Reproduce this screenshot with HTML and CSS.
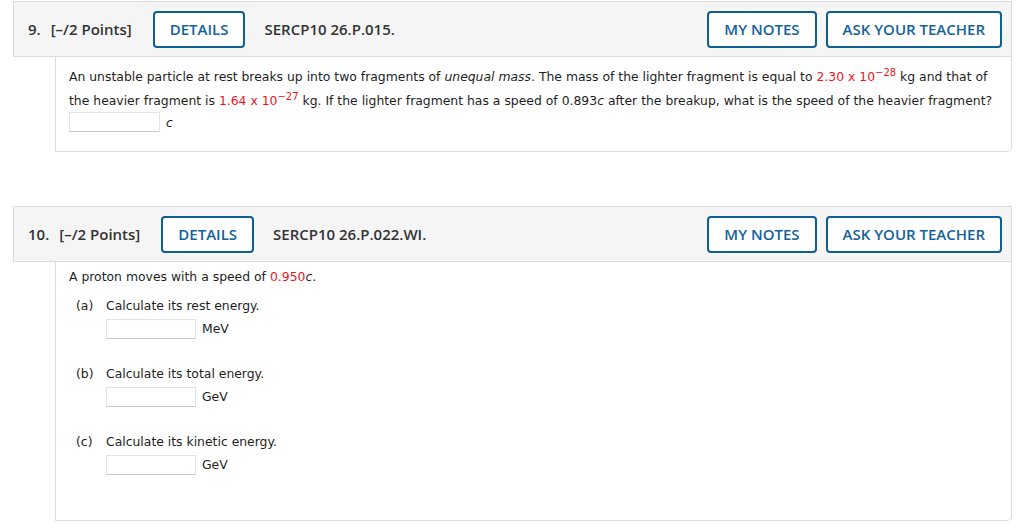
FILE: index.html
```html
<!DOCTYPE html>
<html>
<head>
<meta charset="utf-8">
<link rel="stylesheet" href="styles.css">
</head>
<body>
<div class="page">
  <section class="question q9">
    <div class="q-header">
      <span class="q-num">9.</span>
      <span class="q-points">[–/2 Points]</span>
      <button class="btn btn-details">DETAILS</button>
      <span class="q-code">SERCP10 26.P.015.</span>
      <div class="q-actions">
        <button class="btn">MY NOTES</button>
        <button class="btn">ASK YOUR TEACHER</button>
      </div>
    </div>
    <div class="q-body">
      <p class="q-text">An unstable particle at rest breaks up into two fragments of <em>unequal mass</em>. The mass of the lighter fragment is equal to <span class="red">2.30 x 10<sup>−28</sup></span> kg and that of the heavier fragment is <span class="red">1.64 x 10<sup>−27</sup></span> kg. If the lighter fragment has a speed of 0.893<em>c</em> after the breakup, what is the speed of the heavier fragment?</p>
      <div class="answer"><span class="input"></span><span class="unit"><em>c</em></span></div>
    </div>
  </section>

  <section class="question q10">
    <div class="q-header">
      <span class="q-num">10.</span>
      <span class="q-points">[–/2 Points]</span>
      <button class="btn btn-details">DETAILS</button>
      <span class="q-code">SERCP10 26.P.022.WI.</span>
      <div class="q-actions">
        <button class="btn">MY NOTES</button>
        <button class="btn">ASK YOUR TEACHER</button>
      </div>
    </div>
    <div class="q-body body10">
      <p class="intro">A proton moves with a speed of <span class="red">0.950</span><em>c</em>.</p>
      <div class="part">
        <span class="part-label">(a)</span>
        <div class="part-main">
          <div class="part-text">Calculate its rest energy.</div>
          <div class="answer"><span class="input"></span><span class="unit">MeV</span></div>
        </div>
      </div>
      <div class="part">
        <span class="part-label">(b)</span>
        <div class="part-main">
          <div class="part-text">Calculate its total energy.</div>
          <div class="answer"><span class="input"></span><span class="unit">GeV</span></div>
        </div>
      </div>
      <div class="part">
        <span class="part-label">(c)</span>
        <div class="part-main">
          <div class="part-text">Calculate its kinetic energy.</div>
          <div class="answer"><span class="input"></span><span class="unit">GeV</span></div>
        </div>
      </div>
    </div>
  </section>
</div>
</body>
</html>
```

FILE: styles.css
```css
* { box-sizing: border-box; }
html, body { margin: 0; padding: 0; background: #fff; }
body { font-family: "DejaVu Sans", Verdana, sans-serif; color: #1e1e1e; }

.page {
  padding: 1px 12px 0 13px;
  display: flex;
  flex-direction: column;
  gap: 54px;
}

.q-header {
  height: 56px;
  border: 1px solid #dcdcdc;
  background: #f5f5f5;
  display: flex;
  align-items: center;
  padding: 0 9px 0 14px;
  font-family: "Open Sans", sans-serif;
  font-weight: 600;
  font-size: 15px;
  color: #333;
}
.q-num { margin-right: 10px; }
.q-points { margin-right: 21px; }
.q-code { margin-left: 19px; }

.btn {
  font-family: "Open Sans", sans-serif;
  font-weight: 600;
  font-size: 15px;
  color: #14629a;
  background: #fff;
  border: 2px solid #0f6092;
  border-radius: 4px;
  height: 37px;
  padding: 0 15px;
  margin: 0;
}
.q-actions {
  margin-left: auto;
  display: flex;
  gap: 9px;
}

.q-body {
  margin-left: 42px;
  border: 1px solid #dcdcdc;
  border-top: none;
  border-bottom-right-radius: 5px;
  padding: 8px 6px 19px 13px;
  font-size: 12.4px;
}
.q-text {
  margin: 0;
  line-height: 24px;
}
.red { color: #f0141e; }
sup { font-size: 10px; line-height: 0; vertical-align: 5px; }

.answer {
  display: flex;
  align-items: center;
  gap: 6px;
  margin-top: -1px;
}
.input {
  display: block;
  width: 91px;
  height: 20px;
  border: 1px solid #e3e3e3;
  border-bottom-color: #c8c8c8;
  background: #fff;
}
.unit { font-size: 12.4px; }

.body10 { padding: 6px 13px 45px 13px; }
.intro { margin: 0; line-height: 18px; }
.part {
  display: flex;
  margin-top: 11px;
  margin-left: 7px;
  line-height: 18px;
}
.part + .part { margin-top: 26px; }
.part-label { width: 30px; flex: none; }
.part-main .answer { margin-top: 4px; }
.part-main .input { width: 90px; }
```
